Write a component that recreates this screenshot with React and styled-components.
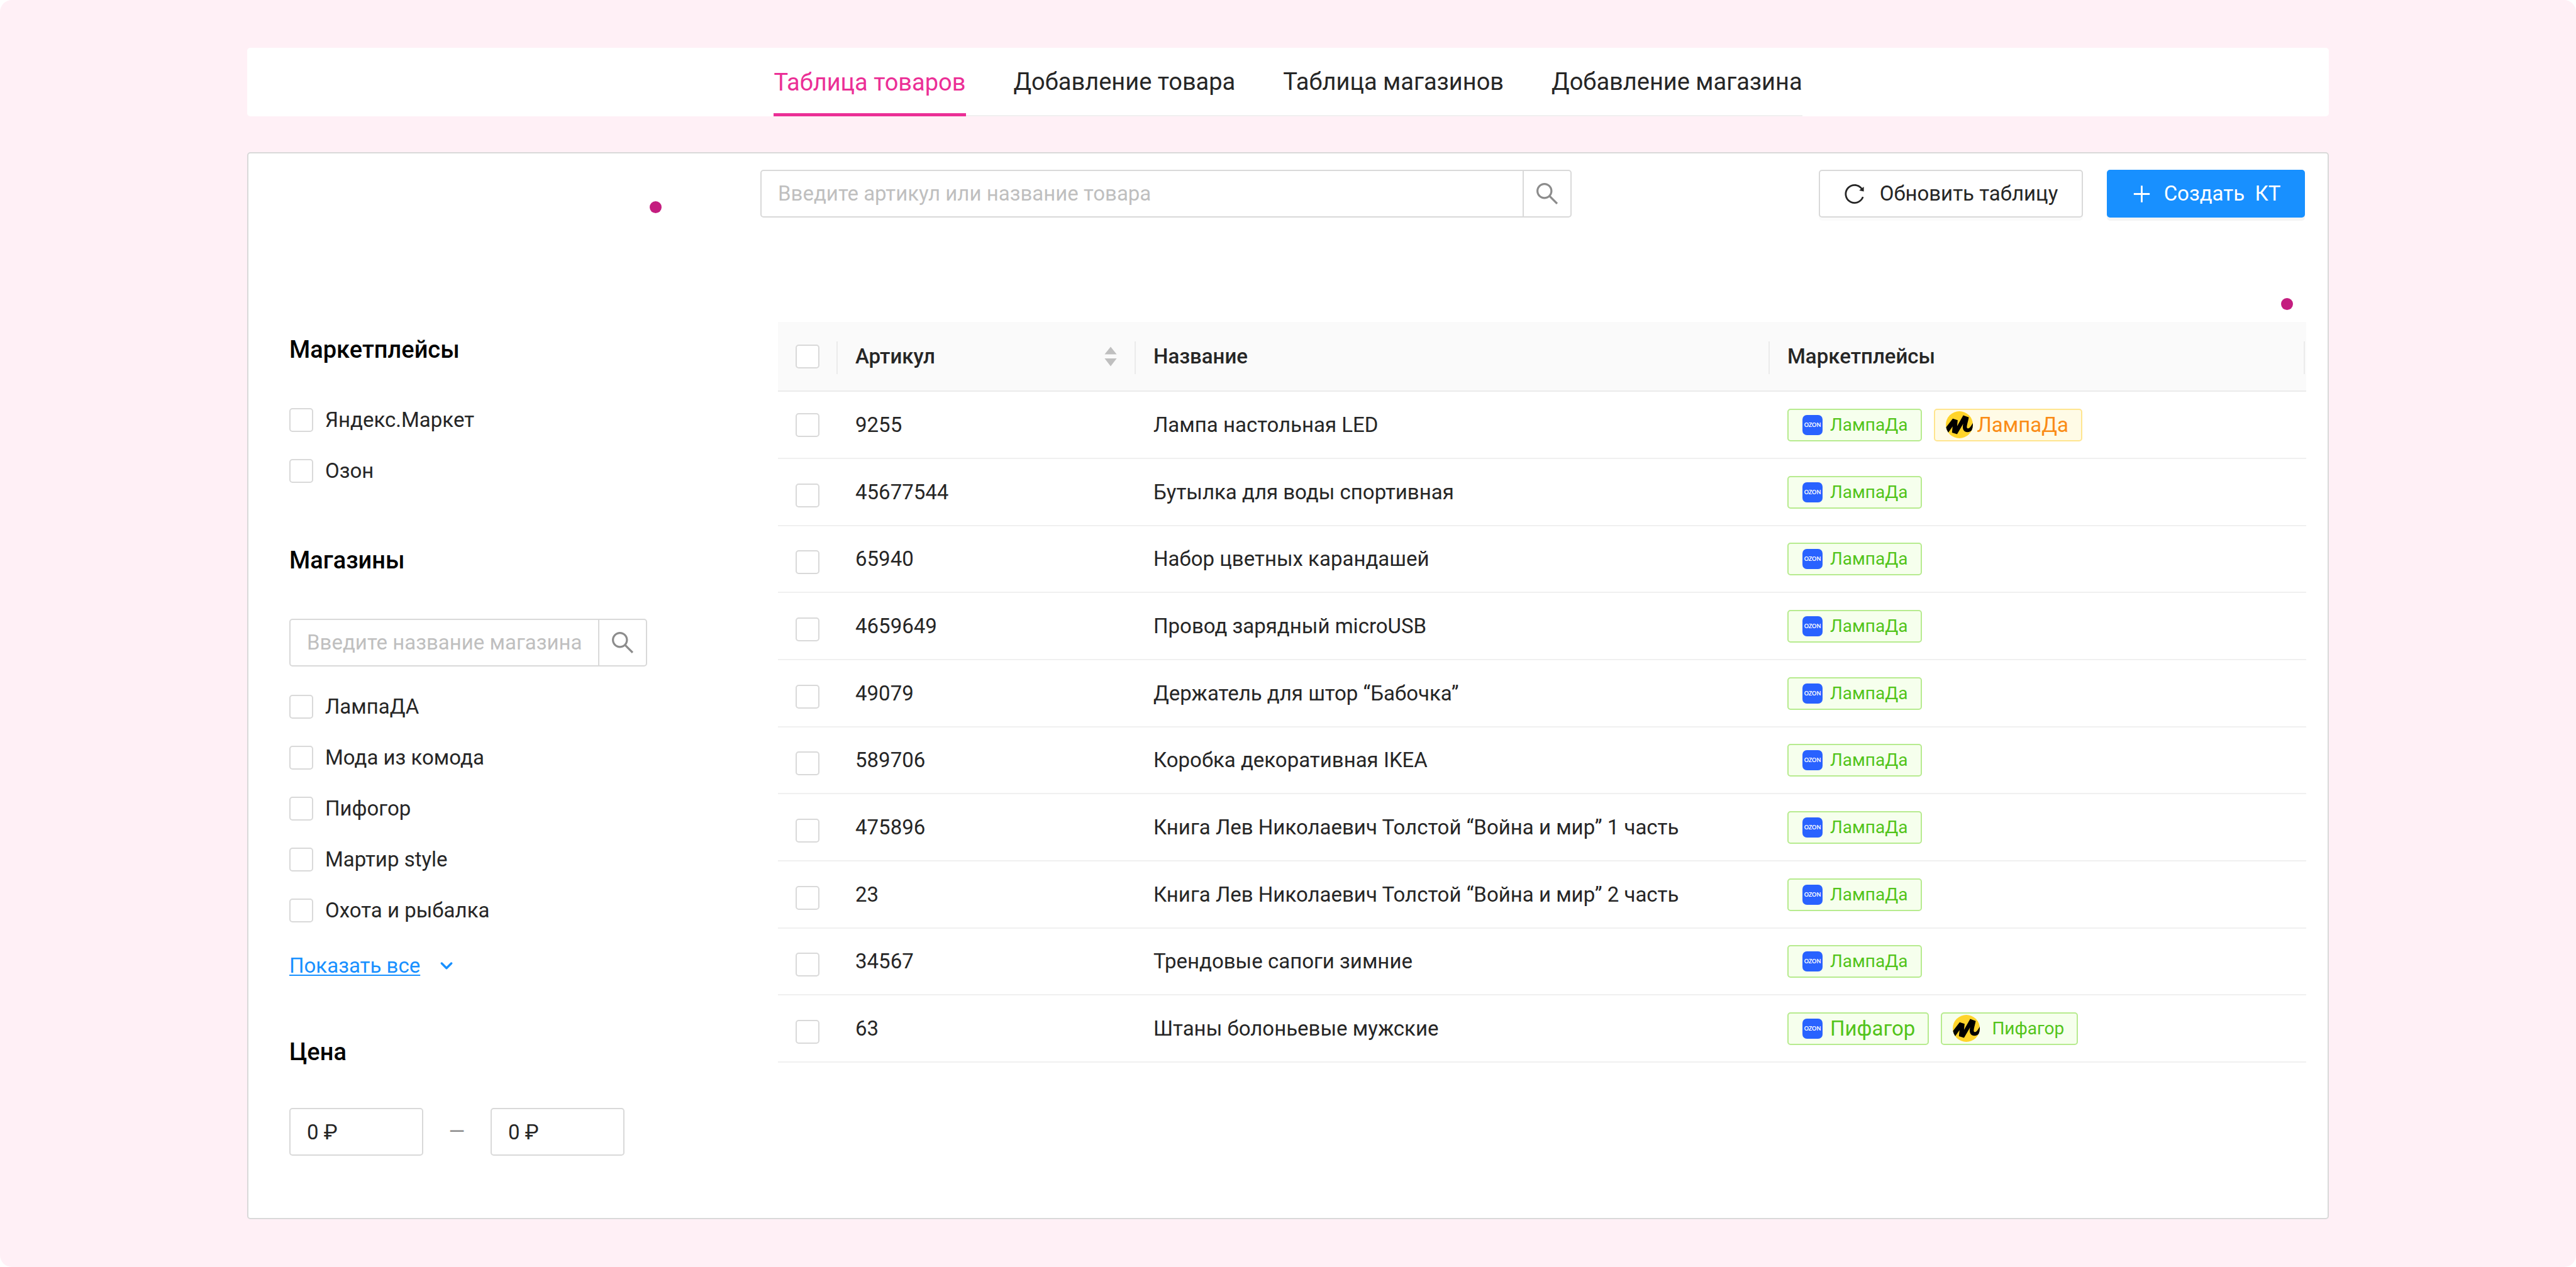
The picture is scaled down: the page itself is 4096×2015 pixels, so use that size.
import React from 'react';
import styled, { createGlobalStyle } from 'styled-components';

const color = {
  page: '#fff0f6',
  text: '#262626',
  muted: '#8c8c8c',
  placeholder: '#bfbfbf',
  border: '#d9d9d9',
  line: '#f0f0f0',
  headLine: '#ebebeb',
  accent: '#eb2f96',
  accentDark: '#c41d7f',
  blue: '#1890ff',
};

const tones = {
  green: { fg: '#52c41a', bg: '#f6ffed', border: '#b7eb8f' },
  gold: { fg: '#fa8c16', bg: '#fffbe6', border: '#ffe58f' },
};

const GlobalStyle = createGlobalStyle`
  *, *::before, *::after { box-sizing: border-box; }
  body {
    margin: 0;
    background: #fff;
    color: ${color.text};
    font-family: Roboto, "Liberation Sans", sans-serif;
    font-size: 33px;
    line-height: 52px;
  }
  button, input { font: inherit; color: inherit; }
`;

const Page = styled.div`
  display: flex;
  flex-direction: column;
  gap: 57px;
  min-height: 100vh;
  padding: 76px 393px;
  border-radius: 19px;
  background: ${color.page};
`;

const NavBar = styled.nav`
  display: flex;
  justify-content: center;
  background: #fff;
  border-radius: 5px;
`;

const TabList = styled.div`
  display: flex;
  gap: 76px;
  box-shadow: inset 0 -2px 0 ${color.line};
`;

const Tab = styled.a`
  display: flex;
  align-items: center;
  height: 109px;
  padding-bottom: ${(p) => (p.$active ? 0 : 2)}px;
  font-size: 38px;
  text-decoration: none;
  color: ${(p) => (p.$active ? color.accent : color.text)};
  box-shadow: ${(p) => (p.$active ? `inset 0 -5px 0 ${color.accent}` : 'none')};
`;

const Panel = styled.main`
  position: relative;
  flex: 1;
  background: #fff;
  border: 2px solid ${color.border};
  border-radius: 5px;
`;

const Hotspot = styled.span`
  position: absolute;
  top: ${(p) => p.$top}px;
  left: ${(p) => (p.$left === undefined ? 'auto' : `${p.$left}px`)};
  right: ${(p) => (p.$right === undefined ? 'auto' : `${p.$right}px`)};
  width: 19px;
  height: 19px;
  border-radius: 50%;
  background: ${color.accentDark};
`;

const Toolbar = styled.header`
  display: flex;
  justify-content: space-between;
  padding: 26px 36px 0 814px;
`;

const Actions = styled.div`
  display: flex;
  gap: 38px;
`;

const Button = styled.button`
  display: flex;
  align-items: center;
  justify-content: center;
  gap: ${(p) => (p.$primary ? 19 : 24)}px;
  min-width: ${(p) => (p.$primary ? 315 : 420)}px;
  height: 76px;
  padding: 0 24px;
  white-space: pre;
  border-radius: 5px;
  border: 2px solid ${(p) => (p.$primary ? color.blue : color.border)};
  background: ${(p) => (p.$primary ? color.blue : '#fff')};
  color: ${(p) => (p.$primary ? '#fff' : color.text)};
  box-shadow: 0 5px 0 rgba(0, 0, 0, ${(p) => (p.$primary ? 0.043 : 0.016)});
`;

const Icon = styled.svg`
  flex: none;
  display: block;
  width: ${(p) => p.$size}px;
  height: ${(p) => p.$size}px;
  fill: currentColor;
`;

const SearchForm = styled.form`
  display: flex;
  flex: 0 1 ${(p) => p.$width}px;
  width: ${(p) => p.$width}px;
  height: 76px;
  border: 2px solid ${color.border};
  border-radius: 5px;
  background: #fff;
`;

const SearchInput = styled.input`
  flex: 1;
  min-width: 0;
  padding: 0 26px;
  border: 0;
  outline: 0;
  background: transparent;
  &::placeholder { color: ${color.placeholder}; opacity: 1; }
`;

const SearchButton = styled.button`
  display: flex;
  align-items: center;
  justify-content: center;
  width: 76px;
  padding: 0;
  border: 0;
  border-left: 2px solid ${color.border};
  background: transparent;
  color: ${color.muted};
`;

const Body = styled.div`
  display: flex;
  align-items: flex-start;
  padding: 166px 34px 0 65px;
`;

const Sidebar = styled.aside`
  flex: none;
  width: 777px;
  padding-top: 16px;
`;

const Section = styled.section`
  & + & { margin-top: 83px; }
`;

const Title = styled.h2`
  margin: 0 0 60px;
  font-size: 38px;
  line-height: 57px;
  font-weight: 500;
  color: #000;
`;

const CheckList = styled.ul`
  display: flex;
  flex-direction: column;
  align-items: flex-start;
  gap: 43px;
  margin: 0;
  padding: 4px 0 12px;
  list-style: none;
`;

const CheckLabel = styled.label`
  display: flex;
  align-items: center;
  gap: 19px;
  height: 38px;
`;

const Checkbox = styled.input.attrs({ type: 'checkbox' })`
  appearance: none;
  display: block;
  flex: none;
  width: 38px;
  height: 38px;
  margin: 0;
  border: 2px solid ${color.border};
  border-radius: 5px;
  background: #fff;
  &:checked { background: ${color.blue}; border-color: ${color.blue}; }
`;

const ShopSearch = styled.div`
  display: flex;
  padding: 4px 0 41px;
`;

const MoreRow = styled.div`
  display: flex;
  align-items: center;
  gap: 28px;
  margin-top: 31px;
  color: ${color.blue};
`;

const MoreLink = styled.a`
  color: inherit;
  text-decoration: underline;
  text-decoration-thickness: 2px;
  text-underline-offset: 3px;
`;

const PriceRow = styled.div`
  display: flex;
  align-items: center;
`;

const PriceInput = styled.input`
  width: 213px;
  height: 76px;
  padding: 0 26px;
  border: 2px solid ${color.border};
  border-radius: 5px;
  outline: 0;
`;

const Dash = styled.span`
  width: 107px;
  text-align: center;
  color: ${color.muted};
`;

const Table = styled.table`
  flex: 1;
  width: 100%;
  table-layout: fixed;
  border-collapse: separate;
  border-spacing: 0;
  text-align: left;
`;

const Col = styled.col`
  width: ${(p) => (p.$width ? `${p.$width}px` : 'auto')};
`;

const HeadCell = styled.th`
  height: 111px;
  padding: 31px 0 0;
  vertical-align: top;
  font-weight: 500;
  background: #fafafa;
  border-bottom: 2px solid ${color.headLine};
  &:last-child { padding-right: 2px; }
`;

const HeadContent = styled.div`
  display: flex;
  align-items: center;
  justify-content: space-between;
  height: 52px;
  padding: 0 28px 5px;
  border-right: 2px solid ${color.headLine};
`;

const SortButton = styled.button`
  display: flex;
  padding: 0;
  border: 0;
  background: transparent;
  color: ${color.placeholder};
`;

const SortIcon = styled.svg`
  display: block;
  width: 20px;
  height: 32px;
  fill: currentColor;
`;

const Row = styled.tr`
  height: 107px;
  &:nth-child(3n) { height: 106px; }
  & + & > td:first-child { padding-top: 10px; }
`;

const Cell = styled.td`
  padding: 0 0 0 28px;
  vertical-align: middle;
  border-bottom: 2px solid ${color.line};
`;

const Tags = styled.div`
  display: flex;
  gap: 19px;
`;

const TagBox = styled.span`
  display: inline-flex;
  align-items: center;
  gap: ${(p) => p.$gap}px;
  height: 52px;
  padding: 0 20px 0 ${(p) => (p.$brand === 'ozon' ? 22 : 17)}px;
  border: 2px solid ${(p) => tones[p.$tone].border};
  border-radius: 5px;
  background: ${(p) => tones[p.$tone].bg};
  color: ${(p) => tones[p.$tone].fg};
  font-size: ${(p) => (p.$large ? 33 : 28)}px;
  line-height: 48px;
`;

const OzonBadge = styled.span`
  display: flex;
  align-items: center;
  justify-content: center;
  width: 32px;
  height: 32px;
  border-radius: 7px;
  background: #2962ff;
  color: #fff;
  font: 700 9px/32px Lato, sans-serif;
`;

function SearchIcon() {
  return (
    <Icon $size={38} viewBox="64 64 896 896" aria-hidden="true">
      <path d="M909.6 854.5L649.9 594.8C690.2 542.7 712 479 712 412c0-80.2-31.3-155.4-87.9-212.1-56.6-56.7-132-87.9-212.1-87.9s-155.5 31.3-212.1 87.9C143.2 256.5 112 331.8 112 412c0 80.1 31.3 155.5 87.9 212.1C256.5 680.8 331.8 712 412 712c67 0 130.6-21.8 182.7-62l259.7 259.6a8.2 8.2 0 0011.6 0l43.6-43.5a8.2 8.2 0 000-11.6zM570.4 570.4C528 612.7 471.8 636 412 636s-116-23.3-158.4-65.6C211.3 528 188 471.8 188 412s23.3-116.1 65.6-158.4C296 211.3 352.2 188 412 188s116.1 23.2 158.4 65.6S636 352.2 636 412s-23.3 116.1-65.6 158.4z" />
    </Icon>
  );
}

function ReloadIcon() {
  return (
    <Icon $size={33} viewBox="64 64 896 896" aria-hidden="true">
      <path d="M909.1 209.3l-56.4 44.1C775.8 155.1 656.2 92 521.9 92 290 92 102.3 279.5 102 511.5 101.7 743.7 289.8 932 521.9 932c181.3 0 335.8-115 394.6-276.1 1.5-4.2-.7-8.9-4.9-10.3l-56.7-19.5a8 8 0 00-10.1 4.8c-1.8 5-3.8 10-5.9 14.9-17.3 41-42.1 77.8-73.7 109.4A344.77 344.77 0 01655.9 829c-42.3 17.9-87.4 27-133.8 27-46.5 0-91.5-9.1-133.8-27A341.5 341.5 0 01279 755.2a342.16 342.16 0 01-73.7-109.4c-17.9-42.4-27-87.4-27-133.9s9.1-91.5 27-133.9c17.3-41 42.1-77.8 73.7-109.4 31.6-31.6 68.4-56.4 109.3-73.8 42.3-17.9 87.4-27 133.8-27 46.5 0 91.5 9.1 133.8 27a341.5 341.5 0 01109.3 73.8c9.9 9.9 19.2 20.4 27.8 31.4l-60.2 47a8 8 0 003 14.1l175.6 43c5 1.2 9.9-2.6 9.9-7.7l.8-180.9c-.1-6.6-7.8-10.3-13-6.2z" />
    </Icon>
  );
}

function PlusIcon() {
  return (
    <Icon $size={33} viewBox="64 64 896 896" aria-hidden="true">
      <path d="M482 152h60q8 0 8 8v704q0 8-8 8h-60q-8 0-8-8V160q0-8 8-8z" />
      <path d="M176 474h672q8 0 8 8v60q0 8-8 8H176q-8 0-8-8v-60q0-8 8-8z" />
    </Icon>
  );
}

function ChevronIcon() {
  return (
    <Icon $size={28} viewBox="0 0 12 12" aria-hidden="true">
      <path d="M2.7 4.3L6 7.6l3.3-3.3" fill="none" stroke="currentColor" strokeWidth="1.5" strokeLinecap="round" strokeLinejoin="round" />
    </Icon>
  );
}

function YandexMarketLogo() {
  return (
    <Icon $size={43} viewBox="0 0 18 18" role="img" aria-label="Яндекс.Маркет">
      <clipPath id="market-circle"><circle cx="9" cy="9" r="9" /></clipPath>
      <circle cx="9" cy="9" r="9" fill="#ffd42b" />
      <path
        clipPath="url(#market-circle)"
        fill="#000"
        d="M0 10.9L4.6 4.9 7.9 6 7.5 9.9 11.6 2.7 15.3 4.1C14.8 7 13.8 9.4 14 10.8 14.2 11.8 15.3 11.5 15.9 10.9 16.8 10 17.5 8.7 18.4 6.8L18.4 11C17.6 13 16 13.9 14.4 13.9 12.1 13.8 11.2 12.2 11.3 10.3 11.3 9.5 11.4 9 11.6 8.3L7.5 15.3 4.1 14.2 4.5 10.2 1.5 14.4 0 14z"
      />
    </Icon>
  );
}

function Search({ width, placeholder }) {
  return (
    <SearchForm $width={width} onSubmit={(e) => e.preventDefault()}>
      <SearchInput placeholder={placeholder} aria-label={placeholder} />
      <SearchButton type="submit" aria-label="Найти"><SearchIcon /></SearchButton>
    </SearchForm>
  );
}

function Checks({ items }) {
  return (
    <CheckList>
      {items.map((item) => (
        <li key={item}>
          <CheckLabel><Checkbox />{item}</CheckLabel>
        </li>
      ))}
    </CheckList>
  );
}

function Tag({ brand, shop, tone = 'green', large = false, gap = 12 }) {
  return (
    <TagBox $brand={brand} $tone={tone} $large={large} $gap={gap}>
      {brand === 'ozon' ? <OzonBadge>OZON</OzonBadge> : <YandexMarketLogo />}
      {shop}
    </TagBox>
  );
}

const tabs = ['Таблица товаров', 'Добавление товара', 'Таблица магазинов', 'Добавление магазина'];
const shops = ['ЛампаДА', 'Мода из комода', 'Пифогор', 'Мартир style', 'Охота и рыбалка'];
const lampada = [{ brand: 'ozon', shop: 'ЛампаДа' }];

const products = [
  { sku: '9255', name: 'Лампа настольная LED', tags: [...lampada, { brand: 'market', shop: 'ЛампаДа', tone: 'gold', large: true, gap: 7 }] },
  { sku: '45677544', name: 'Бутылка для воды спортивная', tags: lampada },
  { sku: '65940', name: 'Набор цветных карандашей', tags: lampada },
  { sku: '4659649', name: 'Провод зарядный microUSB', tags: lampada },
  { sku: '49079', name: 'Держатель для штор “Бабочка”', tags: lampada },
  { sku: '589706', name: 'Коробка декоративная IKEA', tags: lampada },
  { sku: '475896', name: 'Книга Лев Николаевич Толстой “Война и мир” 1 часть', tags: lampada },
  { sku: '23', name: 'Книга Лев Николаевич Толстой “Война и мир” 2 часть', tags: lampada },
  { sku: '34567', name: 'Трендовые сапоги зимние', tags: lampada },
  { sku: '63', name: 'Штаны болоньевые мужские', tags: [{ brand: 'ozon', shop: 'Пифагор', large: true }, { brand: 'market', shop: 'Пифагор', gap: 19 }] },
];

export default function App() {
  return (
    <>
      <GlobalStyle />
      <Page>
        <NavBar>
          <TabList>
            {tabs.map((tab, i) => (
              <Tab key={tab} href="#" $active={i === 0}>{tab}</Tab>
            ))}
          </TabList>
        </NavBar>
        <Panel>
          <Toolbar>
            <Search width={1290} placeholder="Введите артикул или название товара" />
            <Actions>
              <Button type="button"><ReloadIcon />Обновить таблицу</Button>
              <Button type="button" $primary><PlusIcon />{'Создать  КТ'}</Button>
            </Actions>
          </Toolbar>
          <Body>
            <Sidebar>
              <Section>
                <Title>Маркетплейсы</Title>
                <Checks items={['Яндекс.Маркет', 'Озон']} />
              </Section>
              <Section>
                <Title>Магазины</Title>
                <ShopSearch><Search width={569} placeholder="Введите название магазина" /></ShopSearch>
                <Checks items={shops} />
                <MoreRow><MoreLink href="#">Показать все</MoreLink><ChevronIcon /></MoreRow>
              </Section>
              <Section>
                <Title>Цена</Title>
                <PriceRow>
                  <PriceInput defaultValue="0 ₽" aria-label="Цена от" />
                  <Dash>—</Dash>
                  <PriceInput defaultValue="0 ₽" aria-label="Цена до" />
                </PriceRow>
              </Section>
            </Sidebar>
            <Table>
              <colgroup>
                <Col $width={95} />
                <Col $width={474} />
                <Col $width={1008} />
                <Col />
              </colgroup>
              <thead>
                <tr>
                  <HeadCell><HeadContent><Checkbox aria-label="Выбрать все" /></HeadContent></HeadCell>
                  <HeadCell>
                    <HeadContent>
                      Артикул
                      <SortButton type="button" aria-label="Сортировать">
                        <SortIcon viewBox="0 0 20 32" aria-hidden="true">
                          <path d="M10 0.5L19.6 12.5H0.4z" />
                          <path d="M10 31.5L0.4 19H19.6z" />
                        </SortIcon>
                      </SortButton>
                    </HeadContent>
                  </HeadCell>
                  <HeadCell><HeadContent>Название</HeadContent></HeadCell>
                  <HeadCell><HeadContent>Маркетплейсы</HeadContent></HeadCell>
                </tr>
              </thead>
              <tbody>
                {products.map((p) => (
                  <Row key={p.sku}>
                    <Cell><Checkbox aria-label={p.name} /></Cell>
                    <Cell>{p.sku}</Cell>
                    <Cell>{p.name}</Cell>
                    <Cell><Tags>{p.tags.map((t) => <Tag key={t.brand} {...t} />)}</Tags></Cell>
                  </Row>
                ))}
              </tbody>
            </Table>
          </Body>
          <Hotspot $top={76} $left={638} />
          <Hotspot $top={230} $right={55} />
        </Panel>
      </Page>
    </>
  );
}
